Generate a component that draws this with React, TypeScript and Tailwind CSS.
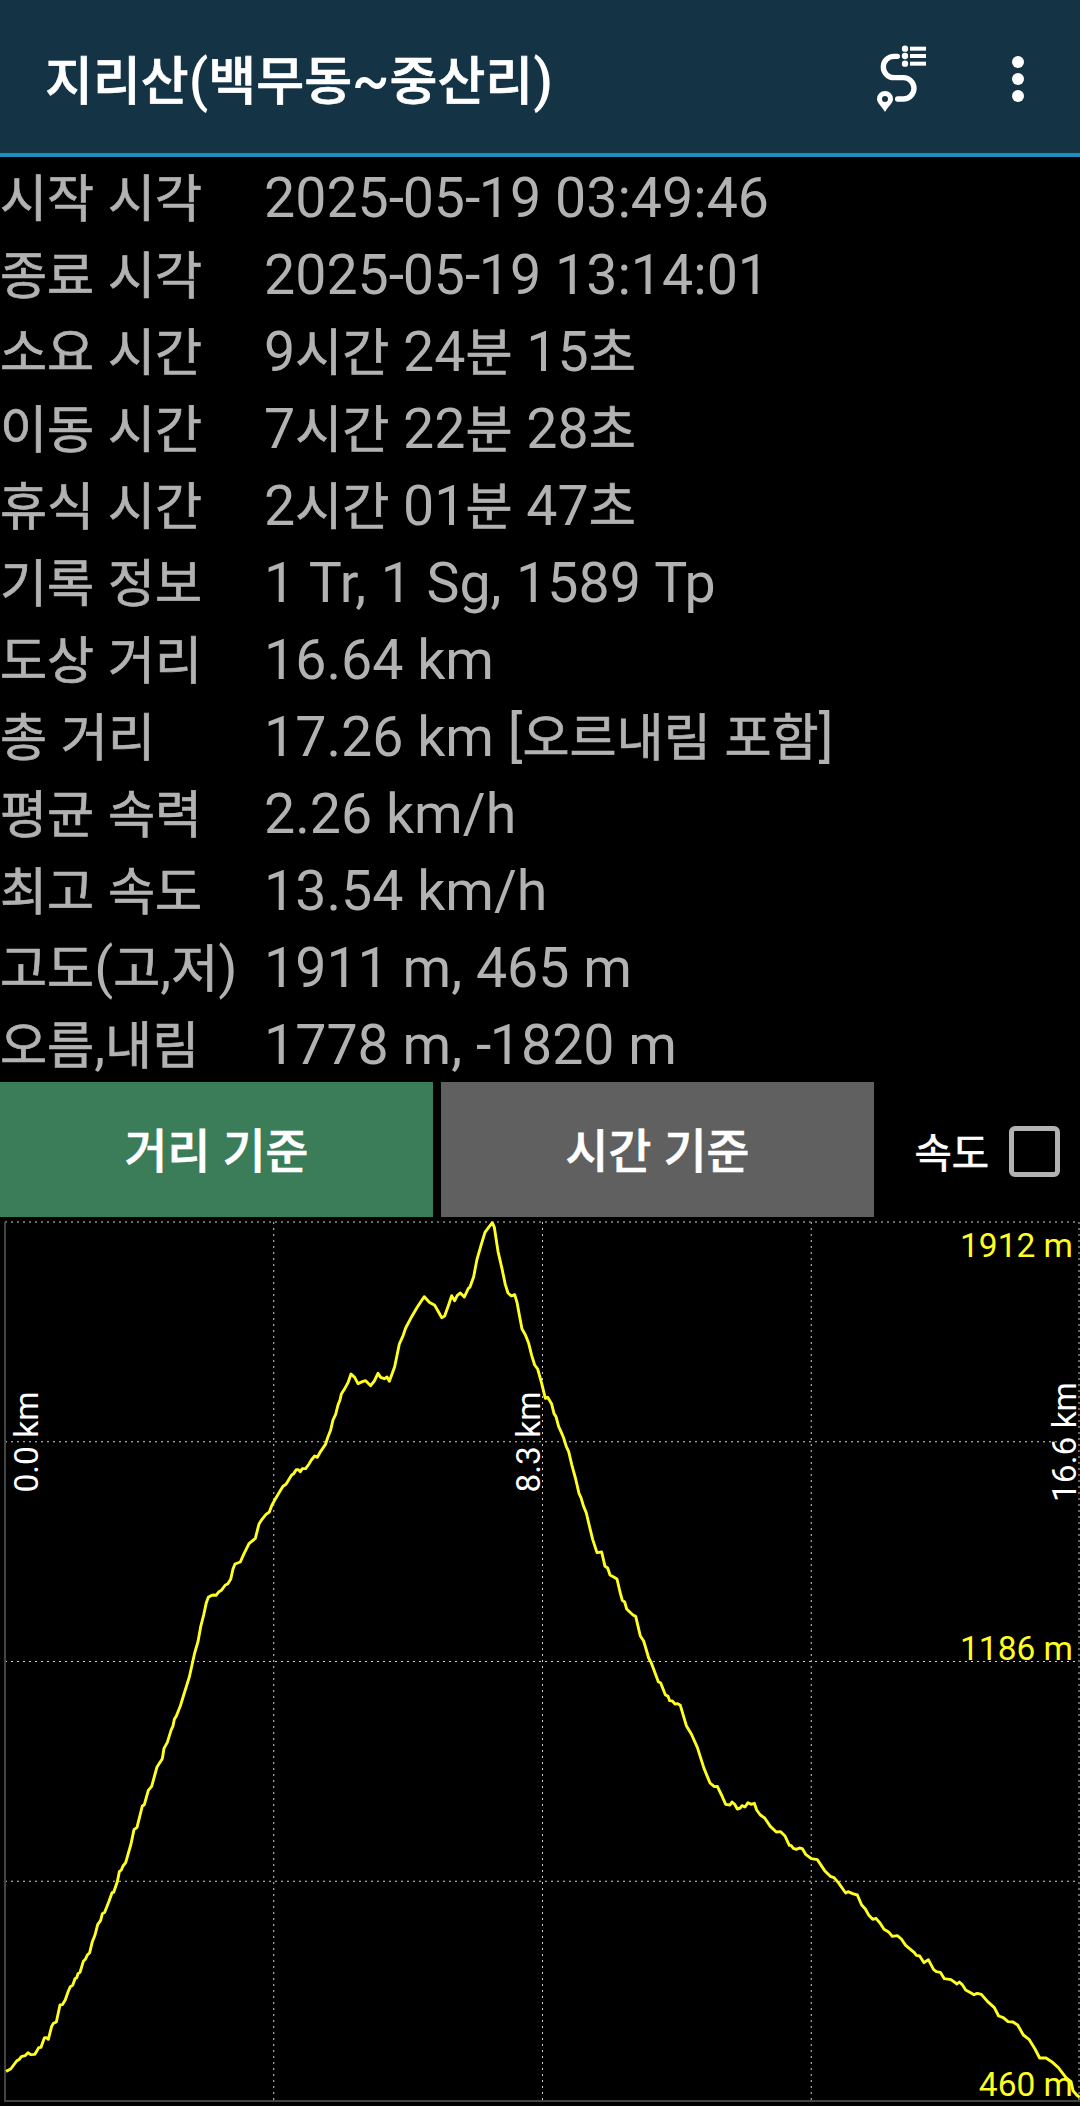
type Segment = { x: number; y: number; points: string };

const STATS = [
  { label: '시작 시각', value: '2025-05-19 03:49:46' },
  { label: '종료 시각', value: '2025-05-19 13:14:01' },
  { label: '소요 시간', value: '9시간 24분 15초' },
  { label: '이동 시간', value: '7시간 22분 28초' },
  { label: '휴식 시간', value: '2시간 01분 47초' },
  { label: '기록 정보', value: '1 Tr, 1 Sg, 1589 Tp', className: '[word-spacing:0.8px]' },
  { label: '도상 거리', value: '16.64 km' },
  { label: '총 거리', value: '17.26 km [오르내림 포함]' },
  { label: '평균 속력', value: '2.26 km/h' },
  { label: '최고 속도', value: '13.54 km/h' },
  { label: '고도(고,저)', value: '1911 m, 465 m' },
  { label: '오름,내림', value: '1778 m, -1820 m' },
];

// elevation track, stored per segment in thirds of a pixel
const TRACK: Segment[] = [
  {
    x: 0,
    y: 1308,
    points:
      '18,1255 32,1248 50,1224 58,1219 64,1211 75,1208 84,1199 92,1205 104,1204 110,1195 116,1184 123,1183 133,1155 139,1154 145,1159 155,1120 160,1111 169,1107 180,1056 187,1055 196,1040 204,1017 211,1001 218,997 225,977 230,974 234,962 240,958 250,925 256,919 262,906 269,899 277,866 285,846 293,815 302,802 307,782 314,778 327,745 336,719 341,718 352,686 358,656 364,651 369,639 377,629 393,573 402,530 411,523 427,459 433,455 445,412 455,400 471,342 487,317 492,286 502,268 513,232 519,219 523,199 529,189 541,159 552,123 559,101 568,72 576,36 584,0',
  },
  {
    x: 0,
    y: -51,
    points:
      '594,1325 602,1280 611,1245 619,1208 625,1192 633,1187 641,1185 648,1186 657,1175 664,1171 676,1155 683,1152 692,1138 699,1107 705,1092 721,1086 731,1063 747,1031 766,1015 777,972 786,958 798,943 808,936 815,917 822,904 838,877 849,859 858,853 875,825 881,821 889,809',
  },
  {
    x: 780,
    y: -51,
    points:
      '115,809 121,815 127,806 137,806 147,792 154,780 164,768 172,772 182,754 196,734 204,710 212,690 219,660 227,643 234,615 240,600 244,582 253,568 264,548 273,522 284,532 294,551 307,545 317,542 326,551 332,557 343,543 354,520 362,532 373,536 381,531 388,544 395,525 404,500 410,471 418,432 428,410 437,384 455,350 472,321 486,300 493,290 508,307 524,316 534,333 545,353 554,348 565,317 575,287 584,302 592,286 601,279 613,291 625,265 630,261 641,230 651,178 663,136 675,97 686,82 697,68 703,82 714,154 726,206 736,254 744,279 754,288 764,284 771,307 778,345 786,387 796,404 806,430 815,466 824,495 833,507 845,550',
  },
  {
    x: 1560,
    y: -51,
    points:
      '76,595 83,592 95,612 102,641 108,650 116,680 124,697 131,714 139,740 146,755 155,793 167,837 177,880 183,893 190,917 199,939 206,969 218,1018 231,1058 245,1056 255,1099 263,1104 270,1125 281,1131 291,1137 300,1176 307,1201 314,1206 320,1227 339,1245',
  },
  {
    x: 1560,
    y: 1149,
    points:
      '347,49 361,108 371,123 386,174 394,189 415,245 422,249 436,284 444,289 449,302 457,303 465,312 473,311 481,316 499,377 514,402 532,442 552,505 570,549 583,560 592,559 606,588 617,613 630,615 636,606 644,613 652,627 661,624 666,617 675,621 684,608 693,613 703,610 710,630 721,645 734,654 751,679 769,696 782,695 795,708 808,736 813,736 820,745 829,748 838,744 847,746 858,764',
  },
  {
    x: 2340,
    y: 1689,
    points:
      '94,236 112,239 134,272 151,289 162,293 175,308 197,339 204,335 218,341 232,345 245,375 256,387 266,405 278,418 288,415 300,429 312,448 327,457 337,469 352,467 364,477 377,496 403,518 409,526 419,528 432,548 445,539 461,569 469,575 481,577 493,596 513,599 531,612 538,606 546,613 557,630 568,636 582,644 592,640 604,643 623,665 643,683 656,708 670,713 684,725 699,726 713,735 730,765 747,778 765,807 779,834 798,834 815,845 835,863 858,893 873,905 879,932 890,945 899,952',
  },
];

const trackPoints = TRACK.map(({ x, y, points }) =>
  points
    .split(' ')
    .map((p) => {
      const [px, py] = p.split(',').map(Number);
      return `${((px + x) / 3).toFixed(2)},${((py + y) / 3).toFixed(2)}`;
    })
    .join(' ')
).join(' ');

// Hangul is set a little smaller and heavier than the Latin text beside it,
// hyphens a little tighter
function Mixed({ text }: { text: string }) {
  return (
    <>
      {text.split(/([가-힣]+|-)/).map((part, i) => {
        if (i % 2 === 0) return part;
        return part === '-' ? (
          <span key={i} className="tracking-[-1.5px]">
            -
          </span>
        ) : (
          <span key={i} className="text-[0.922em] [-webkit-text-stroke:0.7px_currentColor]">
            {part}
          </span>
        );
      })}
    </>
  );
}

function RouteIcon() {
  return (
    <svg viewBox="108 76 156 204" className="h-[68px] w-[52px]" fill="#fff">
      <path
        d="M172 110h-10a32 32 0 0 0 0 64h28a32 32 0 0 1 0 64h-17"
        fill="none"
        stroke="#fff"
        strokeWidth="16"
        strokeLinecap="round"
      />
      {[87, 109, 132].map((y) => (
        <g key={y}>
          <circle cx="195" cy={y} r="9.5" />
          <rect x="210" y={y - 6} width="48" height="12" />
        </g>
      ))}
      <path
        fillRule="evenodd"
        d="M135 214a24 24 0 0 0-24 24c0 13 15 22 24 39c9-17 24-26 24-39a24 24 0 0 0-24-24zm0 15a9 9 0 1 1 0 18a9 9 0 0 1 0-18z"
      />
    </svg>
  );
}

function Header() {
  return (
    <header className="flex h-[157px] items-center border-b-4 border-[#188fbd] bg-[#143445] pl-[45px] pr-[56px]">
      <h1 className="flex-1 whitespace-nowrap pt-[10px] text-[56.5px] font-medium leading-none text-white">
        <Mixed text="지리산(백무동~중산리)" />
      </h1>
      <button className="mr-[84px] pt-[5px]" aria-label="route">
        <RouteIcon />
      </button>
      <button className="flex flex-col gap-[5px] pt-[5px]" aria-label="menu">
        <span className="size-3 rounded-full bg-white" />
        <span className="size-3 rounded-full bg-white" />
        <span className="size-3 rounded-full bg-white" />
      </button>
    </header>
  );
}

function ElevationChart() {
  return (
    <svg viewBox="0 0 1080 889" className="block h-[889px] w-[1080px]">
      <g stroke="#d0d0d0" strokeWidth="1" strokeDasharray="2 4">
        <path d="M5 224.75H1079M5 444.5H1079M5 664.25H1079" />
        <path d="M273.75 5V884M542.5 5V884M811.25 5V884" />
      </g>
      <g stroke="#686868" strokeWidth="2" strokeDasharray="2 4">
        <path d="M5 5H1079" />
        <path d="M1079 5V884" />
      </g>
      <path d="M5 5V884H1080" fill="none" stroke="#444" strokeWidth="2" />
      <polyline
        points={trackPoints}
        fill="none"
        stroke="#ffff20"
        strokeWidth="2.9"
        strokeLinejoin="round"
      />
      <g fill="#ffff20" fontSize="33.5" textAnchor="end">
        <text x="1073" y="40">1912 m</text>
        <text x="1073" y="443">1186 m</text>
        <text x="1073" y="879">460 m</text>
      </g>
      <g fill="#fff" fontSize="33.5" textAnchor="middle">
        <text transform="translate(38 225) rotate(-90)">0.0 km</text>
        <text transform="translate(540 225) rotate(-90)">8.3 km</text>
        <text transform="translate(1076 225) rotate(-90)">16.6 km</text>
      </g>
    </svg>
  );
}

export default function App() {
  return (
    <div className="h-[2106px] w-[1080px] overflow-hidden bg-black font-['Roboto','Noto_Sans_CJK_KR',sans-serif]">
      <Header />

      <dl className="h-[925px] text-[55.5px] text-[#b2b2b2]">
        {STATS.map(({ label, value, className }) => (
          <div key={label} className="flex h-[77px] whitespace-nowrap leading-[83px]">
            <dt className="w-[264px] shrink-0">
              <Mixed text={label} />
            </dt>
            <dd className={className}>
              <Mixed text={value} />
            </dd>
          </div>
        ))}
      </dl>

      <div className="flex h-[135px] gap-2 text-white">
        <button className="w-[433px] bg-[#3b7c59] pt-[3px] text-[50.5px] font-medium">
          <Mixed text="거리 기준" />
        </button>
        <button className="w-[433px] bg-[#606060] pt-[3px] text-[50.5px] font-medium">
          <Mixed text="시간 기준" />
        </button>
        <label className="flex flex-1 items-center justify-end gap-5 pr-5 pt-1 text-[44px]">
          <span className="pt-0.5">
            <Mixed text="속도" />
          </span>
          <span className="size-[51px] rounded-md border-[5px] border-[#b2b2b2]" />
        </label>
      </div>

      <ElevationChart />
    </div>
  );
}
